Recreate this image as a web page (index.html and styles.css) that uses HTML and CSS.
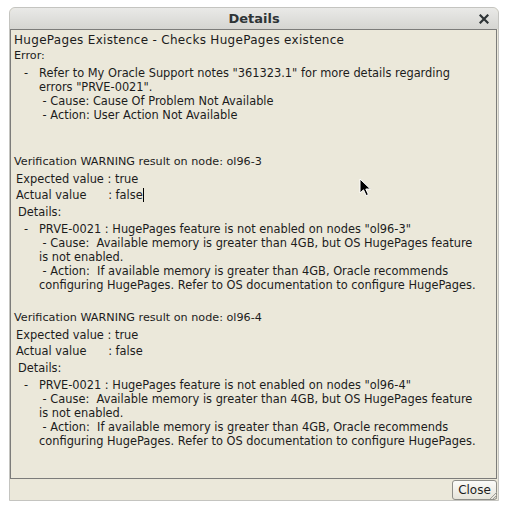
FILE: index.html
```html
<!DOCTYPE html>
<html lang="en">
<head>
  <meta charset="UTF-8">
  <title>Details</title>
  <link rel="stylesheet" href="styles.css">
</head>
<body>

<div class="dialog">
  <div class="titlebar">
    <span class="title">Details</span>
    <svg class="title-close" width="10" height="10" viewBox="0 0 10 10">
      <path d="M1.5 1.5 L8.5 8.5 M8.5 1.5 L1.5 8.5" stroke="#2e3436" stroke-width="2.2" stroke-linecap="square"/>
    </svg>
  </div>

  <div class="content">
    <div class="check">
      <p class="check-name">HugePages Existence - Checks HugePages existence</p>
      <p class="line">Error:</p>
      <ul class="msgs">
        <li>
          <span class="dash">-</span>
          <div class="msg">
            Refer to My Oracle Support notes "361323.1" for more details regarding errors "PRVE-0021".
            <div class="sub">&nbsp;- Cause: Cause Of Problem Not Available</div>
            <div class="sub">&nbsp;- Action: User Action Not Available</div>
          </div>
        </li>
      </ul>
    </div>

    <div class="node first">
      <p class="line">Verification WARNING result on node: ol96-3</p>
      <div class="values">
        <div class="row">Expected value : true</div>
        <div class="row">Actual value      : false<span class="caret"></span></div>
        <div class="row details">Details:</div>
      </div>
      <ul class="msgs">
        <li>
          <span class="dash">-</span>
          <div class="msg">
            PRVE-0021 : HugePages feature is not enabled on nodes "ol96-3"
            <div class="sub">&nbsp;- Cause:&nbsp; Available memory is greater than 4GB, but OS HugePages feature is not enabled.</div>
            <div class="sub">&nbsp;- Action:&nbsp; If available memory is greater than 4GB, Oracle recommends configuring HugePages. Refer to OS documentation to configure HugePages.</div>
          </div>
        </li>
      </ul>
    </div>

    <div class="node">
      <p class="line">Verification WARNING result on node: ol96-4</p>
      <div class="values">
        <div class="row">Expected value : true</div>
        <div class="row">Actual value      : false</div>
        <div class="row details">Details:</div>
      </div>
      <ul class="msgs">
        <li>
          <span class="dash">-</span>
          <div class="msg">
            PRVE-0021 : HugePages feature is not enabled on nodes "ol96-4"
            <div class="sub">&nbsp;- Cause:&nbsp; Available memory is greater than 4GB, but OS HugePages feature is not enabled.</div>
            <div class="sub">&nbsp;- Action:&nbsp; If available memory is greater than 4GB, Oracle recommends configuring HugePages. Refer to OS documentation to configure HugePages.</div>
          </div>
        </li>
      </ul>
    </div>

    <!-- mouse pointer -->
    <svg class="pointer" width="13" height="19" viewBox="0 0 13 19">
      <path d="M1 1 L1 15 L4.5 11.8 L7.2 17.6 L9.4 16.6 L6.8 11 L11.4 11 Z" fill="#000" stroke="#fff" stroke-width="1"/>
    </svg>
  </div>

  <div class="buttons">
    <button class="btn">Close</button>
  </div>

  <svg class="grip" width="10" height="10" viewBox="0 0 10 10">
    <path d="M9 2 L2 9 M9 5 L5 9 M9 8 L8 9" stroke="#a0a09a" stroke-width="1"/>
  </svg>
</div>

</body>
</html>
```

FILE: styles.css
```css
body {
  margin: 0;
  background: #ffffff;
  font-family: "DejaVu Sans", sans-serif;
  font-size: 11.4px;
  color: #1c1c1c;
}

.dialog {
  position: relative;
  width: 488px;
  height: 492px;
  margin: 7px 0 0 9px;
  border: 1px solid #c4c4c0;
  border-radius: 6px 6px 0 0;
  background: #ebe8da;
  display: flex;
  flex-direction: column;
}

.titlebar {
  height: 21px;
  flex: none;
  display: flex;
  align-items: center;
  justify-content: center;
  position: relative;
  border-radius: 6px 6px 0 0;
  background: linear-gradient(#e9e9e7, #d5d5d1);
}
.title {
  font-weight: bold;
  font-size: 13px;
  color: #2e3436;
}
.title-close {
  position: absolute;
  right: 9px;
  top: 6px;
}

.content {
  position: relative;
  flex: 1;
  margin: 0 1px 0 0;
  border: 1px solid #7c7c7a;
  background: #ebe8da;
  padding: 3px 12px 0 3px;
  overflow: hidden;
  line-height: 14px;
}

p {
  margin: 0;
}
.check-name {
  height: 15px;
  font-size: 12px;
  letter-spacing: 0.3px;
}
.line {
  height: 15px;
  font-size: 11.2px;
}
.check .line {
  height: 16px;
  line-height: 16px;
}

.msgs {
  list-style: none;
  margin: 2px 0 0 0;
  padding: 0;
}
.msgs li {
  display: flex;
}
.dash {
  box-sizing: border-box;
  width: 25px;
  padding-left: 10px;
  flex: none;
}

.check {
  margin-bottom: 33px;
}

.node {
  margin-top: 19px;
}
.node.first {
  margin-top: 0;
}

.values {
  padding-left: 2px;
  padding-top: 0.5px;
}
.row {
  height: 16.5px;
  line-height: 17px;
  white-space: pre;
}
.details {
  padding-left: 2px;
}

.caret {
  display: inline-block;
  width: 1px;
  height: 14px;
  background: #000;
  vertical-align: -3px;
}

.pointer {
  position: absolute;
  left: 348px;
  top: 148px;
}

.buttons {
  height: 21px;
  flex: none;
  display: flex;
  justify-content: flex-end;
  align-items: center;
  padding-right: 1px;
}
.btn {
  height: 20px;
  width: 45px;
  padding: 0;
  font-family: "DejaVu Sans", sans-serif;
  font-size: 12px;
  color: #1c1c1c;
  border: 1px solid #8e8e88;
  border-radius: 3px;
  background: linear-gradient(#fbfbf8, #e6e4da);
}

.grip {
  position: absolute;
  right: 0;
  bottom: 0;
}
```
